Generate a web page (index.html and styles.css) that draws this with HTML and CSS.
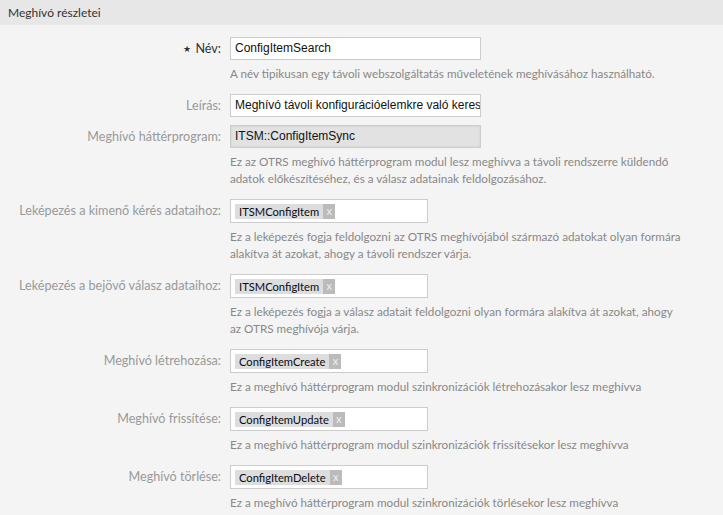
FILE: index.html
```html
<!DOCTYPE html>
<html lang="hu">
<head>
<meta charset="utf-8">
<title>Meghívó részletei</title>
<link rel="stylesheet" href="styles.css">
</head>
<body>
<div class="widget">
  <div class="header">Meghívó részletei</div>
  <div class="content">
    <div class="field">
      <label class="label required"><span class="star">★</span> Név:</label>
      <div class="control"><div class="input">ConfigItemSearch</div></div>
      <div class="help">A név tipikusan egy távoli webszolgáltatás műveletének meghívásához használható.</div>
    </div>
    <div class="field">
      <label class="label">Leírás:</label>
      <div class="control"><div class="input">Meghívó távoli konfigurációelemkre való keresés</div></div>
    </div>
    <div class="field">
      <label class="label">Meghívó háttérprogram:</label>
      <div class="control"><div class="input disabled">ITSM::ConfigItemSync</div></div>
      <div class="help">Ez az OTRS meghívó háttérprogram modul lesz meghívva a távoli rendszerre küldendő<br>adatok előkészítéséhez, és a válasz adatainak feldolgozásához.</div>
    </div>
    <div class="field">
      <label class="label">Leképezés a kimenő kérés adataihoz:</label>
      <div class="control"><div class="tags"><span class="tag">ITSMConfigItem<span class="remove">x</span></span></div></div>
      <div class="help">Ez a leképezés fogja feldolgozni az OTRS meghívójából származó adatokat olyan formára<br>alakítva át azokat, ahogy a távoli rendszer várja.</div>
    </div>
    <div class="field">
      <label class="label">Leképezés a bejövő válasz adataihoz:</label>
      <div class="control"><div class="tags"><span class="tag">ITSMConfigItem<span class="remove">x</span></span></div></div>
      <div class="help">Ez a leképezés fogja a válasz adatait feldolgozni olyan formára alakítva át azokat, ahogy<br>az OTRS meghívója várja.</div>
    </div>
    <div class="field">
      <label class="label">Meghívó létrehozása:</label>
      <div class="control"><div class="tags"><span class="tag">ConfigItemCreate<span class="remove">x</span></span></div></div>
      <div class="help">Ez a meghívó háttérprogram modul szinkronizációk létrehozásakor lesz meghívva</div>
    </div>
    <div class="field">
      <label class="label">Meghívó frissítése:</label>
      <div class="control"><div class="tags"><span class="tag">ConfigItemUpdate<span class="remove">x</span></span></div></div>
      <div class="help">Ez a meghívó háttérprogram modul szinkronizációk frissítésekor lesz meghívva</div>
    </div>
    <div class="field">
      <label class="label">Meghívó törlése:</label>
      <div class="control"><div class="tags"><span class="tag">ConfigItemDelete<span class="remove">x</span></span></div></div>
      <div class="help">Ez a meghívó háttérprogram modul szinkronizációk törlésekor lesz meghívva</div>
    </div>
  </div>
</div>
</body>
</html>
```

FILE: styles.css
```css
html, body {
  margin: 0;
  padding: 0;
  background: #f4f4f4;
}
body {
  font-family: "Lato", "Noto Sans", sans-serif;
  font-size: 12px;
  color: #333;
  width: 723px;
  height: 515px;
  overflow: hidden;
}
.widget {
  background: #f4f4f4;
}
.header {
  background: #e7e7e7;
  height: 25px;
  line-height: 25px;
  padding-left: 8px;
  color: #333;
  font-size: 12px;
}
.content {
  padding-top: 12px;
  display: flex;
  flex-direction: column;
  gap: 8px;
}
.field {
  display: grid;
  grid-template-columns: 221px 1fr;
  column-gap: 9px;
}
.label {
  grid-column: 1;
  text-align: right;
  line-height: 23px;
  font-size: 12.6px;
  color: #999;
}
.label.required {
  color: #333;
}
.star {
  font-size: 9px;
  vertical-align: 1px;
  margin-right: 1px;
}
.control {
  grid-column: 2;
}
.input {
  box-sizing: border-box;
  width: 251px;
  height: 23px;
  border: 1px solid #ccc;
  background: #fff;
  font-family: "Liberation Sans", Arial, sans-serif;
  font-size: 12px;
  color: #111;
  line-height: 21px;
  padding: 0 4px;
  white-space: nowrap;
  overflow: hidden;
}
.input.disabled {
  background: #e2e2e2;
  box-shadow: inset 0 0 3px rgba(0,0,0,0.08);
}
.tags {
  box-sizing: border-box;
  width: 198px;
  height: 24px;
  border: 1px solid #ccc;
  background: #fff;
  padding: 4px 0 0 4px;
}
.tag {
  display: inline-flex;
  align-items: center;
  height: 15px;
  background: #ddd;
  color: #0a0a14;
  font-size: 11.2px;
  padding-left: 4px;
  line-height: 15px;
}
.remove {
  display: inline-block;
  margin-left: 4px;
  width: 12px;
  height: 15px;
  background: #bbb;
  color: #eee;
  text-align: center;
  font-size: 11px;
  line-height: 14px;
}
.help {
  grid-column: 2;
  margin-top: 5px;
  padding-bottom: 4px;
  line-height: 17px;
  font-size: 11.7px;
  color: #888;
}
```
